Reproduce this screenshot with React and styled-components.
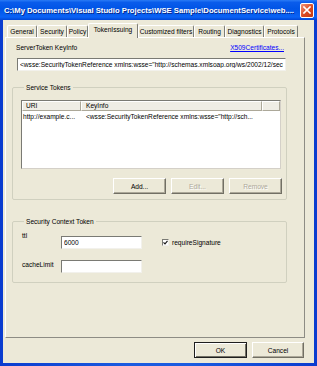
import React from 'react'
import styled, { createGlobalStyle } from 'styled-components'

const GlobalStyle = createGlobalStyle`
  html, body {
    margin: 0;
    padding: 0;
    background: #fff;
  }
  body {
    font-family: 'Liberation Sans', Arial, sans-serif;
    color: #000;
  }
`

const Window = styled.div`
  width: 317px;
  height: 366px;
  box-sizing: border-box;
  padding: 0 3px 3px 3px;
  background: linear-gradient(90deg, #0A3CCF, #1A5BE0 40%, #1A5BE0 60%, #0A3CCF);
  display: flex;
  flex-direction: column;
`

const TitleBar = styled.div`
  height: 20px;
  margin: 0 -3px;
  padding: 0 3px 0 4px;
  display: flex;
  align-items: center;
  justify-content: space-between;
  background: linear-gradient(#2A7BF5, #0A5CEB 12%, #0054E6 45%, #0A63F6 85%, #0046D6);
`

const Title = styled.span`
  color: #fff;
  font-weight: bold;
  font-size: 7.7px;
  white-space: nowrap;
  text-shadow: 1px 1px 0 #0A2A8A;
`

const CloseButton = styled.div`
  width: 14px;
  height: 15px;
  box-sizing: border-box;
  border: 1px solid #fff;
  border-radius: 2px;
  background: linear-gradient(135deg, #F0947A, #D94A22 55%, #C13A12);
  display: flex;
  align-items: center;
  justify-content: center;
`

const Body = styled.div`
  flex: 1;
  background: #ECE9D8;
  display: flex;
  flex-direction: column;
`

const TabStrip = styled.div`
  height: 17px;
  display: flex;
  align-items: flex-end;
  padding-left: 4px;
`

const Tab = styled.div`
  box-sizing: border-box;
  width: ${p => p.$w}px;
  height: ${p => (p.$active ? 15 : 12)}px;
  margin-bottom: ${p => (p.$active ? -1 : 0)}px;
  padding-bottom: ${p => (p.$active ? 3 : 0)}px;
  position: relative;
  z-index: ${p => (p.$active ? 2 : 1)};
  background: #ECE9D8;
  border-top: 1px solid #fff;
  border-left: 1px solid #fff;
  border-right: 1px solid #7E7E78;
  border-radius: 2px 2px 0 0;
  font-size: 6.6px;
  white-space: nowrap;
  display: flex;
  align-items: center;
  justify-content: center;
`

const Panel = styled.div`
  box-sizing: border-box;
  width: 300px;
  height: 301px;
  margin-left: 2px;
  border: 1px solid;
  border-color: #fff #8D8C84 #8D8C84 #fff;
  display: flex;
  flex-direction: column;
`

const FieldHeader = styled.div`
  display: flex;
  justify-content: space-between;
  align-items: center;
  margin-top: 5px;
  height: 9px;
  padding: 0 20px 0 10px;
`

const Label = styled.span`
  font-size: 6.6px;
  line-height: ${p => p.$lh || 9}px;
  width: ${p => (p.$w ? `${p.$w}px` : 'auto')};
  flex: none;
  white-space: nowrap;
`

const Link = styled.a`
  font-size: 6.6px;
  color: #0000FF;
  text-decoration: underline;
  cursor: pointer;
`

const TextBox = styled.input`
  box-sizing: border-box;
  width: ${p => p.$w}px;
  height: 13px;
  margin: ${p => p.$m || '0'};
  padding: 0 2px;
  font-family: 'Liberation Sans', Arial, sans-serif;
  font-size: 6.6px;
  color: #000;
  background: #fff;
  border: 1px solid;
  border-color: #7A7A74 #F2F1EC #F2F1EC #7A7A74;
  outline: none;
  flex: none;
`

const Group = styled.fieldset`
  margin: ${p => p.$top}px 0 0 6px;
  width: 275px;
  min-width: 0;
  box-sizing: border-box;
  border: 1px solid #D0D0BF;
  border-radius: 2px;
  padding: 0 4px ${p => p.$bottom}px 8px;
`

const Legend = styled.legend`
  padding: 0 2px;
  margin-left: 3px;
  font-size: 6.6px;
  line-height: 9px;
`

const ListView = styled.div`
  margin-top: 8px;
  width: 260px;
  height: 69px;
  box-sizing: border-box;
  background: #fff;
  border: 1px solid;
  border-color: #7A7A74 #D4D0C8 #D4D0C8 #7A7A74;
  display: flex;
  flex-direction: column;
`

const HeaderRow = styled.div`
  display: flex;
  height: 10px;
`

const HeaderCell = styled.div`
  box-sizing: border-box;
  width: ${p => (p.$w ? `${p.$w}px` : 'auto')};
  flex: ${p => (p.$w ? 'none' : '1')};
  padding-left: ${p => p.$pad}px;
  background: #EFEDE5;
  border-top: 1px solid #fff;
  border-left: 1px solid #fff;
  border-right: 1px solid #ACA899;
  border-bottom: 1px solid #ACA899;
  font-size: 6.6px;
  line-height: 8px;
  white-space: nowrap;
`

const ItemRow = styled.div`
  display: flex;
  height: 10px;
  margin-top: 1px;
`

const ItemCell = styled.div`
  width: ${p => (p.$w ? `${p.$w}px` : 'auto')};
  flex: ${p => (p.$w ? 'none' : '1')};
  box-sizing: border-box;
  padding-left: ${p => p.$pad}px;
  font-size: 6.6px;
  line-height: 10px;
  white-space: nowrap;
  overflow: hidden;
`

const ButtonRow = styled.div`
  display: flex;
  justify-content: flex-end;
  gap: 5px;
  margin-top: ${p => p.$top || 0}px;
  padding-right: ${p => p.$right || 0}px;
`

const Button = styled.button`
  box-sizing: border-box;
  width: ${p => p.$w || 53}px;
  height: 16px;
  padding: 0;
  font-family: 'Liberation Sans', Arial, sans-serif;
  font-size: 6.6px;
  background: #ECE9D8;
  color: ${p => (p.disabled ? '#ACA899' : '#000')};
  text-shadow: ${p => (p.disabled ? '1px 1px 0 #fff' : 'none')};
  border: 1px solid;
  border-color: ${p => (p.$default ? '#1E1E1E' : '#fff #716F64 #716F64 #fff')};
  box-shadow: ${p => (p.$default
    ? 'inset 1px 1px 0 #fff, inset -1px -1px 0 #716F64'
    : 'inset -1px -1px 0 #ACA899')};
`

const FormRow = styled.div`
  display: flex;
  align-items: flex-start;
  margin-top: ${p => p.$top}px;
  padding-left: 1px;
`

const CheckWrap = styled.label`
  display: flex;
  align-items: center;
  gap: 3px;
  margin: ${p => p.$top}px 0 0 20px;
  height: 13px;
  font-size: 6.6px;
`

const CheckBox = styled.span`
  width: 7px;
  height: 7px;
  box-sizing: border-box;
  background: #fff;
  border: 1px solid;
  border-color: #7A7A74 #F2F1EC #F2F1EC #7A7A74;
  display: flex;
  align-items: center;
  justify-content: center;
`

const Footer = styled.div`
  flex: 1;
  padding-top: 4px;
`

const tabs = [
  ['General', 30],
  ['Security', 30],
  ['Policy', 21],
  ['TokenIssuing', 50],
  ['Customized filters', 56],
  ['Routing', 31],
  ['Diagnostics', 39],
  ['Protocols', 34]
]

export default function App () {
  return (
    <>
      <GlobalStyle />
      <Window>
        <TitleBar>
          <Title>C:\My Documents\Visual Studio Projects\WSE Sample\DocumentService\web....</Title>
          <CloseButton>
            <svg width='8' height='8' viewBox='0 0 8 8'>
              <path d='M1 1L7 7M7 1L1 7' stroke='#fff' strokeWidth='1.6' strokeLinecap='square' />
            </svg>
          </CloseButton>
        </TitleBar>
        <Body>
          <TabStrip>
            {tabs.map(([name, w]) => (
              <Tab key={name} $w={w} $active={name === 'TokenIssuing'}>{name}</Tab>
            ))}
          </TabStrip>
          <Panel>
            <FieldHeader>
              <Label>ServerToken KeyInfo</Label>
              <Link>X509Certificates...</Link>
            </FieldHeader>
            <TextBox
              $w={269}
              $m='6px 0 0 11px'
              readOnly
              value='<wsse:SecurityTokenReference xmlns:wsse="http://schemas.xmlsoap.org/ws/2002/12/secext"><wsse:KeyIdentifier /></wsse:SecurityTokenReference>'
            />
            <Group $top={12} $bottom={5}>
              <Legend>Service Tokens</Legend>
              <ListView>
                <HeaderRow>
                  <HeaderCell $w={59} $pad={3}>URI</HeaderCell>
                  <HeaderCell $w={181} $pad={4}>KeyInfo</HeaderCell>
                  <HeaderCell $pad={0} />
                </HeaderRow>
                <ItemRow>
                  <ItemCell $w={59} $pad={1}>http://example.c...</ItemCell>
                  <ItemCell $pad={5}>&lt;wsse:SecurityTokenReference xmlns:wsse="http://sch...</ItemCell>
                </ItemRow>
              </ListView>
              <ButtonRow $top={9}>
                <Button>Add...</Button>
                <Button disabled>Edit...</Button>
                <Button disabled>Remove</Button>
              </ButtonRow>
            </Group>
            <Group $top={17} $bottom={9}>
              <Legend>Security Context Token</Legend>
              <FormRow $top={5}>
                <Label $w={39}>ttl</Label>
                <TextBox $w={81} $m='5px 0 0 0' readOnly value='6000' />
                <CheckWrap $top={5}>
                  <CheckBox>
                    <svg width='5' height='5' viewBox='0 0 5 5'>
                      <path d='M0.5 2.3L2 3.8L4.5 0.8' stroke='#1E1E1E' strokeWidth='1.2' fill='none' />
                    </svg>
                  </CheckBox>
                  requireSignature
                </CheckWrap>
              </FormRow>
              <FormRow $top={11}>
                <Label $w={39} $lh={10}>cacheLimit</Label>
                <TextBox $w={81} readOnly value='' />
              </FormRow>
            </Group>
          </Panel>
          <Footer>
            <ButtonRow $right={10}>
              <Button $default>OK</Button>
              <Button $w={52}>Cancel</Button>
            </ButtonRow>
          </Footer>
        </Body>
      </Window>
    </>
  )
}
